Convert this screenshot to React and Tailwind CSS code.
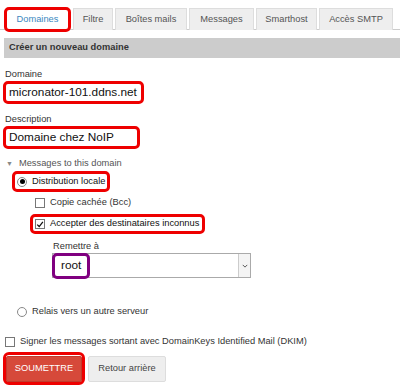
import React from 'react';

const tabs = [
    { label: 'Filtre', w: 'w-[40px]' },
    { label: 'Boîtes mails', w: 'w-[72px]' },
    { label: 'Messages', w: 'w-[65px]' },
    { label: 'Smarthost', w: 'w-[61px]' },
    { label: 'Accès SMTP', w: 'w-[74px]' },
];

function Radio({ checked }) {
    return (
        <span className="w-[10px] h-[10px] rounded-full border border-[#888] bg-white flex items-center justify-center shrink-0">
            {checked && <span className="w-[5px] h-[5px] rounded-full bg-black" />}
        </span>
    );
}

function Check({ checked }) {
    return (
        <span className="w-[10px] h-[10px] border border-[#777] bg-white flex items-center justify-center shrink-0">
            {checked && (
                <svg viewBox="0 0 10 10" className="w-[9px] h-[9px]">
                    <path d="M1.5 5.2 L4 7.6 L8.6 1.8" fill="none" stroke="#111" strokeWidth="1.6" />
                </svg>
            )}
        </span>
    );
}

export default function App() {
    return (
        <div className="w-[400px] h-[389px] bg-white overflow-hidden whitespace-nowrap font-['Liberation_Sans',Arial,sans-serif] text-[9.3px] text-[#333]">
            {/* Tabs */}
            <div className="mt-[7px] h-[23px] flex items-start gap-[2px] pl-[4px] border-b border-[#ccc]">
                <div className="w-[67px] h-[25px] border-[3px] border-[#ee0000] rounded-[5px] bg-white flex items-center justify-center text-[#3a87c0]">
                    Domaines
                </div>
                {tabs.map((t) => (
                    <div
                        key={t.label}
                        className={`${t.w} mt-[1px] h-[22px] bg-[#eeeeee] border border-b-0 border-[#dddddd] flex items-center justify-center text-[#555]`}
                    >
                        {t.label}
                    </div>
                ))}
            </div>

            {/* Header */}
            <div className="mt-[8px] ml-[4px] h-[20px] bg-[#cccccc] flex items-center pl-[5px] font-bold text-[#333]">
                Créer un nouveau domaine
            </div>

            {/* Domaine */}
            <div className="mt-[10px] ml-[5px] leading-[12px]">Domaine</div>
            <div className="mt-[1px] ml-[3px] w-[141px] h-[23px] border-[3px] border-[#ee0000] rounded-[5px] flex items-center pl-[3px] text-[11.8px] text-[#111]">
                micronator-101.ddns.net
            </div>

            {/* Description */}
            <div className="mt-[9px] ml-[5px] leading-[12px]">Description</div>
            <div className="mt-[1px] ml-[3px] w-[137px] h-[23px] border-[3px] border-[#ee0000] rounded-[5px] flex items-center pl-[3px] text-[11.8px] text-[#111]">
                Domaine chez NoIP
            </div>

            {/* Messages to this domain */}
            <div className="mt-[9px] ml-[6px] h-[12px] flex items-center gap-[6px] text-[#555]">
                <span className="text-[7px] text-[#888]">▼</span>
                Messages to this domain
            </div>

            <div className="mt-[1px] ml-[12px] w-[98px] h-[21px] border-[3px] border-[#ee0000] rounded-[5px] flex items-center gap-[5px] pl-[2px] text-[#111]">
                <Radio checked />
                Distribution locale
            </div>

            <div className="mt-[5px] ml-[35px] h-[12px] flex items-center gap-[5px] text-[#333]">
                <Check />
                Copie cachée (Bcc)
            </div>

            <div className="mt-[5px] ml-[30px] w-[175px] h-[20px] border-[3px] border-[#ee0000] rounded-[5px] flex items-center gap-[5px] pl-[2px] text-[#111]">
                <Check checked />
                Accepter des destinataires inconnus
            </div>

            {/* Remettre à */}
            <div className="mt-[6px] ml-[53px] leading-[12px]">Remettre à</div>
            <div className="relative mt-[1px] ml-[52px] w-[199px] h-[25px] border border-[#aaa] bg-white flex items-center justify-end">
                <div className="w-[12px] h-[23px] border-l border-[#ccc] bg-[#f4f4f4] flex items-center justify-center">
                    <svg viewBox="0 0 8 8" className="w-[6px] h-[6px]">
                        <path d="M1 2.5 L4 5.5 L7 2.5" fill="none" stroke="#555" strokeWidth="1.3" />
                    </svg>
                </div>
                <div className="absolute -left-[1px] -top-[1px] w-[38px] h-[26px] border-[3px] border-[#800080] rounded-[5px] flex items-center pl-[6px] text-[11.8px] text-[#111]">
                    root
                </div>
            </div>

            {/* Relais */}
            <div className="mt-[28px] ml-[17px] h-[12px] flex items-center gap-[5px] text-[#333]">
                <Radio />
                Relais vers un autre serveur
            </div>

            {/* DKIM */}
            <div className="mt-[18px] ml-[5px] h-[12px] flex items-center gap-[5px] text-[#333]">
                <Check />
                Signer les messages sortant avec DomainKeys Identified Mail (DKIM)
            </div>

            {/* Buttons */}
            <div className="mt-[4px] ml-[3px] flex items-center gap-[3px]">
                <div className="w-[82px] h-[33px] border-[3px] border-[#ee0000] rounded-[6px] flex items-center justify-center">
                    <button className="w-[76px] h-[26px] bg-[#d6493a] border border-[#c23b2d] rounded-[2px] text-white text-[9.3px]">
                        SOUMETTRE
                    </button>
                </div>
                <button className="w-[78px] h-[26px] bg-[#eeeeee] border border-[#dddddd] rounded-[2px] text-[#444] text-[9.3px]">
                    Retour arrière
                </button>
            </div>
        </div>
    );
}
